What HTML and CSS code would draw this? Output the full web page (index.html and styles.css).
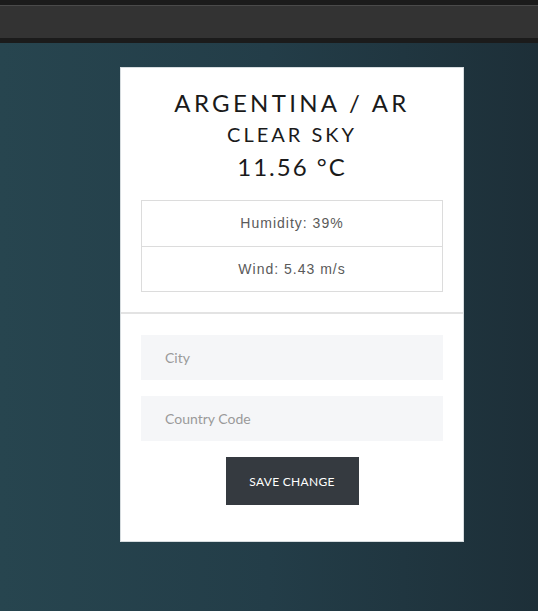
FILE: index.html
```html
<!DOCTYPE html>
<html>
<head>
<meta charset="utf-8">
<link rel="stylesheet" href="styles.css">
</head>
<body>
<div class="topbar"><div class="topbar-inner"></div></div>
<main class="stage">
  <section class="card">
    <div class="weather">
      <h1 class="place">ARGENTINA / AR</h1>
      <h2 class="desc">CLEAR SKY</h2>
      <div class="temp">11.56 °C</div>
      <ul class="details">
        <li>Humidity: 39%</li>
        <li>Wind: 5.43 m/s</li>
      </ul>
    </div>
    <form class="form">
      <input class="field" type="text" placeholder="City">
      <input class="field" type="text" placeholder="Country Code">
      <button class="btn" type="button">SAVE CHANGE</button>
    </form>
  </section>
</main>
</body>
</html>
```
FILE: styles.css
```css
* { box-sizing: border-box; }
html, body { margin: 0; padding: 0; height: 100%; }
body {
  font-family: Lato, "Open Sans", sans-serif;
  background: linear-gradient(90deg, #27454f 0%, #233d48 50%, #1d2f38 100%);
  display: flex;
  flex-direction: column;
}
.topbar {
  height: 43px;
  background: #1b1b1b;
  padding-top: 5px;
  padding-bottom: 5px;
}
.topbar-inner {
  height: 33px;
  background: #333333;
  border-top: 1px solid #4a4a4a;
}
.stage {
  flex: 1;
  display: flex;
  justify-content: flex-start;
  padding-top: 24px;
  padding-left: 120px;
}
.card {
  width: 344px;
  height: 475px;
  background: #fff;
  border: 1px solid #d6dcdf;
}
.weather {
  padding: 20px 20px 20px;
  border-bottom: 2px solid #e3e3e3;
  text-align: center;
}
.place {
  margin: 0;
  font-weight: 400;
  font-size: 24px;
  letter-spacing: 3.3px;
  line-height: 30px;
  color: #1a1a1a;
}
.desc {
  margin: 2px 0 0;
  font-weight: 400;
  font-size: 20px;
  letter-spacing: 3px;
  line-height: 28px;
  color: #1a1a1a;
}
.temp {
  margin-top: 4px;
  font-size: 24px;
  letter-spacing: 2px;
  line-height: 30px;
  color: #1a1a1a;
}
.details {
  list-style: none;
  margin: 18px 0 0;
  padding: 0;
  border: 1px solid #dcdcdc;
}
.details li {
  height: 45px;
  line-height: 45px;
  font-family: "Liberation Sans", Arial, sans-serif;
  font-size: 14px;
  letter-spacing: 1px;
  color: #5a5a5a;
}
.details li + li { border-top: 1px solid #dcdcdc; }
.form {
  padding: 21px 20px 0;
  display: flex;
  flex-direction: column;
  align-items: center;
  gap: 16px;
}
.field {
  width: 302px;
  height: 45px;
  border: none;
  background: #f5f6f8;
  padding: 0 24px;
  font-family: Lato, sans-serif;
  font-size: 14px;
  color: #555;
  outline: none;
}
.field::placeholder { color: #9a9a9a; }
.btn {
  width: 133px;
  height: 48px;
  border: none;
  background: #353a40;
  color: #fff;
  font-family: Lato, sans-serif;
  font-size: 12px;
  letter-spacing: 0.3px;
}
```
